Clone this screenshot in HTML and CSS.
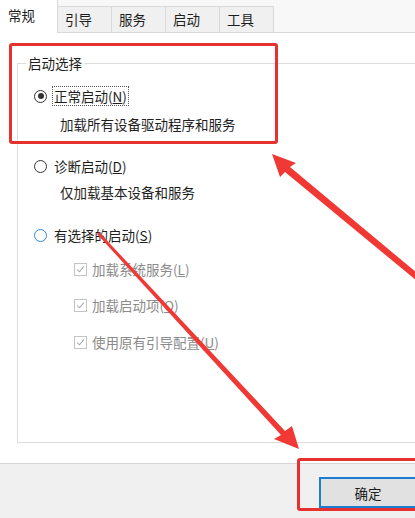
FILE: index.html
```html
<!DOCTYPE html>
<html lang="zh-CN">
<head>
<meta charset="utf-8">
<title>系统配置</title>
<link rel="stylesheet" href="styles.css">
</head>
<body>
<div class="window">
  <div class="tabs">
    <div class="tab active">常规</div>
    <div class="tab">引导</div>
    <div class="tab">服务</div>
    <div class="tab">启动</div>
    <div class="tab">工具</div>
  </div>
  <div class="panel">
    <fieldset class="group">
      <legend>启动选择</legend>
      <div class="opt o1"><span class="radio checked"></span><span class="label focus">正常启动(<u>N</u>)</span></div>
      <div class="desc d1">加载所有设备驱动程序和服务</div>
      <div class="opt o2"><span class="radio"></span><span class="label">诊断启动(<u>D</u>)</span></div>
      <div class="desc d2">仅加载基本设备和服务</div>
      <div class="opt o3"><span class="radio hover"></span><span class="label">有选择的启动(<u>S</u>)</span></div>
      <div class="check c1"><span class="box"><svg viewBox="0 0 13 13"><polyline points="2.5,6.5 5.2,9.2 10.5,3.2"/></svg></span><span class="clabel">加载系统服务(<u>L</u>)</span></div>
      <div class="check c2"><span class="box"><svg viewBox="0 0 13 13"><polyline points="2.5,6.5 5.2,9.2 10.5,3.2"/></svg></span><span class="clabel">加载启动项(<u>O</u>)</span></div>
      <div class="check c3"><span class="box"><svg viewBox="0 0 13 13"><polyline points="2.5,6.5 5.2,9.2 10.5,3.2"/></svg></span><span class="clabel">使用原有引导配置(<u>U</u>)</span></div>
    </fieldset>
  </div>
  <div class="footer">
    <button class="btn">确定</button>
  </div>
  <div class="mark mark-top"></div>
  <div class="mark mark-btn"></div>
  <svg class="arrows" viewBox="0 0 415 518" width="415" height="518">
    <polygon points="272,154 296,163 290,167 417,273 417,281 285,172 280,177"/>
    <polygon points="299,449 292,426 285,431 99,232 97,234 281,435 274,439"/>
  </svg>
</div>
</body>
</html>
```
FILE: styles.css
```css
html, body {
  margin: 0;
  padding: 0;
  background: #f0f0f0;
}
.window {
  position: relative;
  width: 415px;
  height: 518px;
  overflow: hidden;
  font-family: "Noto Sans CJK SC", "Microsoft YaHei", sans-serif;
  font-size: 13.5px;
  color: #1e1e1e;
  background: #f0f0f0;
}
.tabs {
  box-sizing: border-box;
  height: 33px;
  display: flex;
  align-items: flex-end;
  background: #f8f8f8;
  border-bottom: 1px solid #d9d9d9;
}
.tab {
  box-sizing: border-box;
  height: 26px;
  width: 55px;
  display: flex;
  align-items: center;
  padding-left: 7px;
  padding-bottom: 1px;
  background: #f0f0f0;
  border: 1px solid #d9d9d9;
  border-bottom: none;
  margin-left: -1px;
  line-height: 18px;
}
.tab.active {
  height: 33px;
  width: 58px;
  margin-left: 0;
  margin-bottom: -1px;
  padding-left: 8px;
  padding-bottom: 3px;
  background: #ffffff;
  border-left: none;
  border-top: none;
  position: relative;
  z-index: 1;
}
.panel {
  box-sizing: border-box;
  height: 431px;
  background: #ffffff;
  border-bottom: 1px solid #d6d6d6;
  padding-top: 21px;
}
.group {
  box-sizing: border-box;
  margin: 0 0 0 17px;
  height: 389px;
  padding: 0 0 0 8px;
  border: 1px solid #dcdcdc;
  border-right: none;
  min-width: 0;
}
.group legend {
  padding: 0 2px;
  line-height: 18px;
  height: 18px;
  color: #1e1e1e;
}
.opt {
  height: 20px;
  display: flex;
  align-items: center;
  margin-left: 8px;
}
.o1 { margin-top: 14px; }
.o2 { margin-top: 22px; }
.o3 { margin-top: 23px; }
.radio {
  box-sizing: border-box;
  width: 13px;
  height: 13px;
  border-radius: 50%;
  border: 1.5px solid #333333;
  background: #ffffff;
  display: flex;
  align-items: center;
  justify-content: center;
  flex: none;
}
.radio.checked::after {
  content: "";
  width: 6px;
  height: 6px;
  border-radius: 50%;
  background: #333333;
}
.radio.hover {
  border-color: #2f87d6;
}
.label {
  margin-left: 5px;
  padding: 0 1px;
  line-height: 18px;
  border: 1px dotted transparent;
}
.label.focus {
  border-color: #555555;
}
.desc {
  height: 20px;
  line-height: 20px;
  margin-left: 34px;
}
.d1 { margin-top: 8px; }
.d2 { margin-top: 6px; }
.check {
  height: 20px;
  display: flex;
  align-items: center;
  margin-left: 48px;
  color: #8a8a8a;
}
.c1 { margin-top: 14px; }
.c2 { margin-top: 16px; }
.c3 { margin-top: 17px; }
.box {
  box-sizing: border-box;
  width: 13px;
  height: 13px;
  border: 1px solid #c4c4c4;
  background: #ffffff;
  flex: none;
  display: block;
}
.box svg {
  display: block;
  width: 11px;
  height: 11px;
  fill: none;
  stroke: #a8a8a8;
  stroke-width: 1.2;
}
.clabel {
  margin-left: 5px;
  line-height: 18px;
}
.footer {
  box-sizing: border-box;
  height: 54px;
  padding: 13px 0 0 319px;
  background: #f0f0f0;
}
.btn {
  box-sizing: border-box;
  width: 98px;
  height: 31px;
  border: 2px solid #1a7fd4;
  background: #e1e1e1;
  font-family: inherit;
  font-size: 13.5px;
  color: #1e1e1e;
  padding: 0;
  display: block;
}
.mark {
  position: absolute;
  box-sizing: border-box;
  border: 3px solid #e5322f;
  border-radius: 3px;
}
.mark-top {
  left: 9px;
  top: 43px;
  width: 269px;
  height: 101px;
}
.mark-btn {
  left: 297px;
  top: 458px;
  width: 130px;
  height: 53px;
}
.arrows {
  position: absolute;
  left: 0;
  top: 0;
  pointer-events: none;
}
.arrows polygon {
  fill: #f03834;
}
```
